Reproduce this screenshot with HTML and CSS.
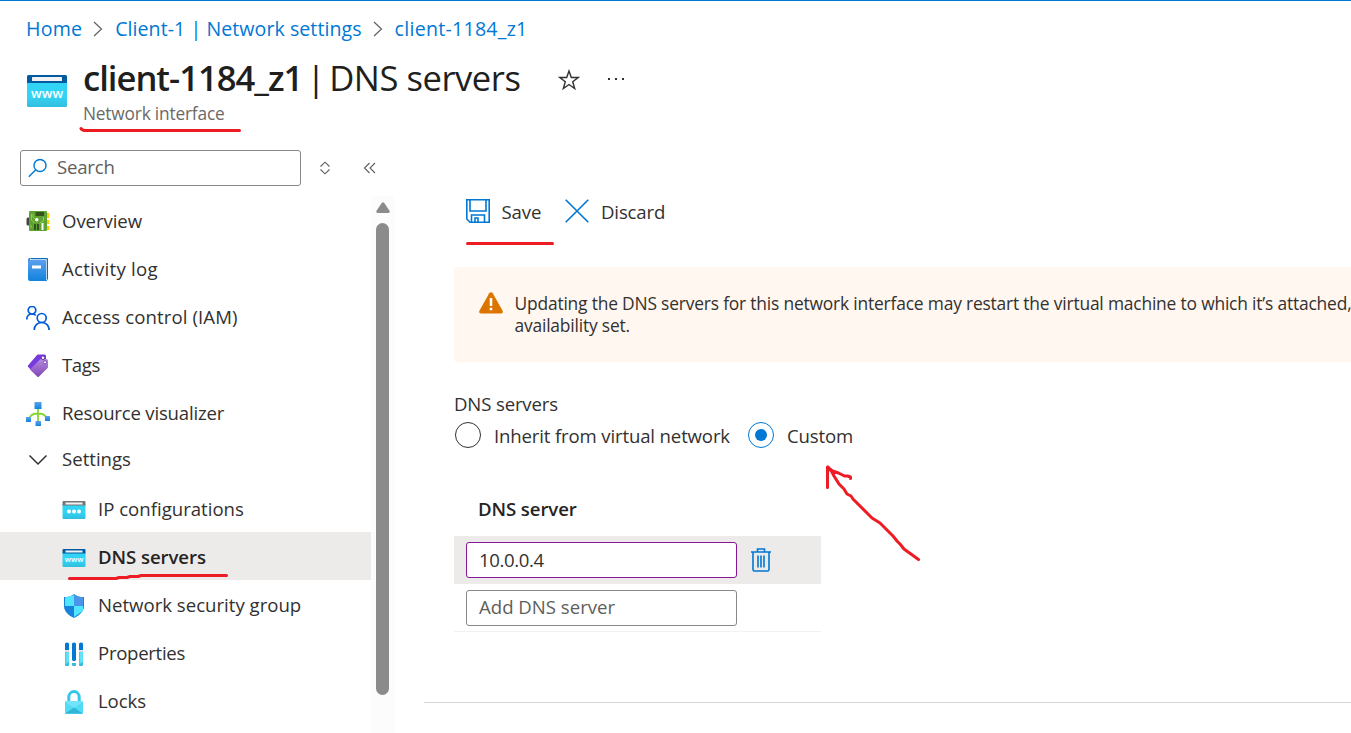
FILE: index.html
```html
<!DOCTYPE html>
<html lang="en">
<head>
<meta charset="utf-8">
<title>client-1184_z1 | DNS servers</title>
<link rel="stylesheet" href="styles.css">
</head>
<body>
<div class="page">
  <header class="header">
    <nav class="crumbs">
      <a class="crumb-home">Home</a>
      <svg width="10" height="16" viewBox="0 0 10 16"><path d="M1 1l7.500 7L1 15"/></svg>
      <a class="crumb-client">Client-1 | Network settings</a>
      <svg width="10" height="16" viewBox="0 0 10 16"><path d="M1 1l7.500 7L1 15"/></svg>
      <a class="crumb-nic">client-1184_z1</a>
    </nav>
    <div class="heading">
      <svg class="heading-icon" width="40" height="32" viewBox="0 0 40 32">
        <defs><linearGradient id="cy" x1="0" y1="0" x2="0" y2="1"><stop offset="0" stop-color="#32d4f5"/><stop offset=".55" stop-color="#32d4f5"/><stop offset="1" stop-color="#32bedd"/></linearGradient></defs>
        <path fill="url(#cy)" d="M0 8h40v22.500a1.500 1.500 0 0 1-1.500 1.500h-37A1.500 1.500 0 0 1 0 30.500z"/>
        <path fill="#005ba1" d="M1.500 0h37A1.500 1.500 0 0 1 40 1.500V8H0V1.500A1.500 1.500 0 0 1 1.500 0z"/>
        <rect x="5" y="2" width="30" height="4" rx=".5" fill="#f2f2f2"/>
        <text class="www" x="20" y="23" font-size="13" textLength="32">www</text>
      </svg>
      <div class="titles">
        <h1><b>client-1184_z1</b><i>|</i><span>DNS servers</span></h1>
        <p>Network interface</p>
      </div>
      <svg class="star" width="22" height="22" viewBox="0 0 22 22"><path d="M11 2l2.300 6.500h6.900l-5.500 4.200 2 6.800L11 15.500l-5.700 4 2-6.800L1.800 8.500h6.900z"/></svg>
      <svg class="dots" width="18" height="4" viewBox="0 0 18 4"><path d="M1 1h2v2H1zM8 1h2v2H8zM15 1h2v2h-2z"/></svg>
    </div>
  </header>
  <div class="body">
    <aside class="side">
      <div class="tools">
        <div class="search"><svg width="20" height="20" viewBox="0 0 20 20"><circle cx="12" cy="7.500" r="6"/><path d="M7.800 11.700L.8 18.700"/></svg><span>Search</span></div>
        <svg class="sort" width="12" height="14" viewBox="0 0 12 14"><path d="M1.500 5.500L6 1.200l4.500 4.300M1.500 8.500L6 12.800l4.500-4.300"/></svg>
        <svg class="collapse" width="14" height="12" viewBox="0 0 14 12"><path d="M6.500 1l-5 5 5 5M12 1L7 6l5 5"/></svg>
      </div>
      <div class="scroller">
        <ul class="menu">
          <li><svg width="24" height="24" viewBox="0 0 24 24"><path fill="#444" d="M2 7.500h1.500v8H2A1.500 1.500 0 0 1 .5 14V9A1.500 1.500 0 0 1 2 7.500z"/><path fill="#fc0" d="M20 3h3.300v5H20zM20 10h3.300v4H20zM20 16h3.300v4H20z"/><rect x="3" y="1" width="18" height="20" rx="1" fill="#5ea233"/><path fill="none" stroke="#86d633" d="M5.500 4v6l3 3M7 4v3l3 3M17.500 7v4l-4 2M5 18v-3"/><path fill="#35521a" d="M9.500 2h8.500v4H9.500zM8 14h2v6H8zM11 14h2v6h-2z"/><circle cx="10.800" cy="9.800" r="1.700" fill="#fff"/><path fill="#fff" d="M15.500 13h2v7h-2z"/></svg><span class="t-overview">Overview</span></li>
          <li><svg width="24" height="24" viewBox="0 0 24 24"><defs><linearGradient id="bk" x1="0" y1="0" x2="0" y2="1"><stop offset="0" stop-color="#5ea0ef"/><stop offset="1" stop-color="#0f83dc"/></linearGradient></defs><path fill="#0f6cbd" d="M4 0h17a1 1 0 0 1 1 1v20l-2 2.500z"/><path fill="#e5f1fb" d="M4 1.200h16.800V22H4z"/><path fill="url(#bk)" d="M3.500 2H19a1 1 0 0 1 1 1v19a1 1 0 0 1-1 1H4a2 2 0 0 1-2-2V1.500c0 .3.700.500 1.500.500z"/><path fill="#0f6cbd" d="M2 2a2 2 0 0 1 2-2v1.200q-1 .2-.500 1.300z"/><rect x="6" y="7.500" width="9" height="3" fill="#fff"/></svg><span class="t-activity">Activity log</span></li>
          <li><svg class="people" width="24" height="24" viewBox="0 0 24 24"><circle cx="6" cy="4.200" r="3.800"/><path d="M.8 13.500c0-3.600 2.200-5.500 5.200-5.500 1.700 0 2.900.500 3.800 1.500"/><circle cx="15.700" cy="12" r="4.500"/><path d="M8.200 24c0-4.500 3.200-7.500 7.500-7.500s7.500 3 7.500 7.500"/></svg><span class="t-access">Access control (IAM)</span></li>
          <li><svg width="24" height="24" viewBox="0 0 24 24"><defs><linearGradient id="tg" x1="0" y1="0" x2="0" y2="1"><stop offset="0" stop-color="#b689e0"/><stop offset="1" stop-color="#7f46b4"/></linearGradient></defs><path fill="#773adc" d="M12 .5h6.500A1.500 1.500 0 0 1 20 2v4.500L7 18l-5-5.200a1 1 0 0 1 0-1.300L11 1z"/><path fill="url(#tg)" d="M14.500 5h6A1.500 1.500 0 0 1 22 6.500v6.500a2 2 0 0 1-.6 1.200l-8.600 8.600a1 1 0 0 1-1.400 0L4 15.500z"/><circle cx="17" cy="3.700" r="1.800" fill="#fff" stroke="#552f99"/><circle cx="19" cy="8.300" r="1.600" fill="#fff" stroke="#7a48ae"/></svg><span class="t-tags">Tags</span></li>
          <li><svg width="24" height="24" viewBox="0 0 24 24"><path fill="none" stroke="#86d633" stroke-width="1.800" d="M12 6v14M3.500 16c1-3 4-4.500 8.500-4.500s7.500 1.500 8.500 4.500"/><g fill="url(#bk)"><rect x="8.500" width="7" height="7" rx=".6"/><rect y="15" width="5" height="5" rx=".5"/><rect x="9.500" y="19" width="5.500" height="5" rx=".5"/><rect x="19" y="14" width="5" height="5" rx=".5"/></g></svg><span class="t-resource">Resource visualizer</span></li>
          <li class="group"><svg class="chev" width="24" height="24" viewBox="0 0 24 24"><path d="M3.500 7.500L12 16l8.500-8.500"/></svg><span class="t-settings">Settings</span></li>
          <li class="sub"><svg width="24" height="24" viewBox="0 0 24 24"><path fill="url(#cy)" d="M.5 6.500h23V20a1 1 0 0 1-1 1h-21a1 1 0 0 1-1-1z"/><path fill="#767676" d="M1.500 3h21a1 1 0 0 1 1 1v3.500H.5V4a1 1 0 0 1 1-1z"/><path fill="#f2f2f2" d="M3.500 4.500h17v2h-17z"/><g fill="#fff"><circle cx="7" cy="13.500" r="2"/><circle cx="12" cy="13.500" r="2"/><circle cx="17" cy="13.500" r="2"/></g></svg><span class="t-ip">IP configurations</span></li>
          <li class="sub active"><svg width="24" height="24" viewBox="0 0 24 24"><path fill="url(#cy)" d="M.5 6.500h23V20a1 1 0 0 1-1 1h-21a1 1 0 0 1-1-1z"/><path fill="#005ba1" d="M1.500 3h21a1 1 0 0 1 1 1v3.500H.5V4a1 1 0 0 1 1-1z"/><path fill="#f2f2f2" d="M3.500 4.500h17v2h-17z"/><text class="www" x="12" y="15.500" font-size="7.500" textLength="18.500">www</text></svg><span class="t-dns">DNS servers</span></li>
          <li class="sub"><svg width="24" height="24" viewBox="0 0 24 24"><clipPath id="sh"><path d="M12 0c3 2.500 6 3 10 3v9c0 6-5 9.500-10 12C7 21.500 2 18 2 12V3c4 0 7-.5 10-3z"/></clipPath><g clip-path="url(#sh)"><path fill="#1783dc" d="M0 0h24v24H0z"/><path fill="#50e6ff" d="M3 3.500L12 1v11H3zM12 12h9v5l-9 6z"/><path fill="#4a94ea" d="M12 1l9 2.500V12h-9z"/></g></svg><span class="t-nsg">Network security group</span></li>
          <li class="sub"><svg width="24" height="24" viewBox="0 0 24 24"><path fill="#0078d4" d="M3 1.500Q5-.5 7 1.500V8H3zM10 1.500q2-2 4 0V18l-1 1h-2l-1-1zM17 1.500q2-2 4 0V8h-4z"/><path fill="#32bedd" d="M3 10h4v13q0 1-1 1H4q-1 0-1-1zM10 21h4v2q0 1-1 1h-2q-1 0-1-1zM17 10h4v13q0 1-1 1h-2q-1 0-1-1z"/><path fill="#5fe1f7" d="M3.500 10H7v10l-3.500 2zM17.500 10H21v10l-3.500 2z"/><path fill="#ccc" d="M3 8.500h4v1.200H3zM17 8.500h4v1.200h-4z"/></svg><span class="t-prop">Properties</span></li>
          <li class="sub"><svg width="24" height="24" viewBox="0 0 24 24"><path fill="none" stroke="#32c8ea" stroke-width="3" d="M6.800 12V7.200a5.200 5.700 0 0 1 10.400 0V12"/><rect x="3" y="11" width="18" height="13" rx="1" fill="#50dcf5"/><path fill="#9cebff" d="M3 12l9 6 9-6v-1H3z" opacity=".45"/><path fill="#32b4d4" d="M3.300 23.500L12 17.500l8.700 6z"/></svg><span class="t-locks">Locks</span></li>
        </ul>
        <div class="track">
          <svg width="14" height="11" viewBox="0 0 14 11"><path fill="#8b8b8b" d="M5.900.7q1.100-1 2.200 0l5.400 8q.8 2-1.100 2.200H1.600Q-.3 10.700.5 8.700z"/></svg>
          <div class="thumb"></div>
        </div>
      </div>
    </aside>
    <main class="main">
      <div class="commands">
        <svg class="line" width="24" height="24" viewBox="0 0 24 24"><path d="M.8.8h22.400v22.400H4L.8 20zM4 .8V12h16V.8M5.500 23V16h13v7M9 23v-4h3v4"/></svg><span class="t-save">Save</span>
        <svg class="line x" width="24" height="24" viewBox="0 0 24 24"><path d="M.7.7l22.600 22.600M23.300.7L.7 23.300"/></svg><span class="t-discard">Discard</span>
      </div>
      <div class="warning">
        <svg width="24" height="22" viewBox="0 0 24 22"><path fill="#db7500" d="M10.200 1.200q1.800-2 3.600 0l9.800 17.500q.9 2.600-1.500 2.800H1.900Q-.5 21.300.4 18.700z"/><path fill="#fff" d="M10.700 6h2.600v8h-2.600zM10.700 15.800h2.600v2.400h-2.600z"/></svg>
        <p><span class="warn-a">Updating the DNS servers for this network interface may restart the virtual machine to which it’s attached,</span><br><span class="warn-b">availability set.</span></p>
      </div>
      <div class="label"><span class="t-label">DNS servers</span></div>
      <div class="radios">
        <span class="radio"></span><span class="t-inherit">Inherit from virtual network</span>
        <span class="radio on"></span><span class="t-custom">Custom</span>
      </div>
      <div class="table">
        <div class="th"><span class="t-th">DNS server</span></div>
        <div class="row selected">
          <div class="field edited"><span class="t-val">10.0.0.4</span></div>
          <svg class="line trash" width="20" height="24" viewBox="0 0 20 24"><path d="M0 4h20M6.500 4V1h7v3M2 4v17.500q0 1.500 1.500 1.500h13q1.500 0 1.500-1.500V4M7 7.500v12M10 7.500v12M13 7.500v12"/></svg>
        </div>
        <div class="row"><div class="field"><span class="t-add">Add DNS server</span></div></div>
      </div>
      <div class="rule"></div>
    </main>
  </div>
  <svg class="ink" width="1351" height="733" viewBox="0 0 1351 733">
    <path d="M81 128.500q1 2 5 2h153.500M467.500 243.500h85M69.500 578.500H116l3-1h8l3-1h8l3-1h85.500"/>
    <path d="M918.500 559.500L904 549l-4-5-3-3-4-5-9-9-4-4-8-5-19-19-2-3-4-2-3-5-5-5-5-8-2-4-4-5M827.500 487.500v-20.500l5 4 6 2 6 3h3l3 1v1.500"/>
  </svg>
</div>
</body>
</html>
```
FILE: styles.css
```css
* { box-sizing: border-box; }
body { margin: 0; background: #fff; color: #323130; font: 18.6px/26px "Open Sans", "Noto Sans", sans-serif; }
h1, p, ul { margin: 0; padding: 0; }
svg { flex: none; display: block; }
span, a, b { white-space: nowrap; }
.page { position: relative; width: 1351px; height: 733px; overflow: hidden; border-top: 1px solid #0078d4; }
.header { height: 149px; padding: 14px 0 0 26px; }
.crumbs { display: flex; align-items: center; height: 28px; color: #0078d4; font-size: 19.6px; }
.crumbs svg { margin: 0 12px 0 11px; fill: none; stroke: #605e5c; stroke-width: 1.2; }
.crumb-home { letter-spacing: .2px; }
.crumb-client { letter-spacing: .05px; }
.crumb-nic { letter-spacing: .26px; }
.heading { display: flex; align-items: flex-start; height: 90px; padding-top: 10px; }
.heading-icon { margin: 22px 16px 0 1px; }
.www { fill: #fff; font-weight: 600; text-anchor: middle; }
.titles { width: 475px; }
h1 { display: flex; height: 52px; line-height: 50px; font-size: 34.6px; font-weight: 400; color: #201f1e; letter-spacing: -.47px; }
h1 b { font-weight: 600; letter-spacing: -1px; }
h1 i { font-style: normal; width: 27px; text-align: center; }
.titles p { height: 22px; line-height: 18px; font-size: 17.3px; color: #6b6967; letter-spacing: -.18px; }
.star { margin: 16px 0 0; fill: none; stroke: #323130; stroke-width: 1.4; }
.dots { margin: 24px 0 0 27px; fill: #323130; }
.body { display: flex; height: 583px; }
.side { width: 394px; }
.tools { display: flex; align-items: center; height: 36px; padding-left: 20px; }
.search { display: flex; align-items: center; width: 281px; height: 36px; padding-left: 7px; border: 1px solid #8a8886; border-radius: 3px; color: #605e5c; }
.search svg { margin-right: 9px; fill: none; stroke: #0078d4; stroke-width: 1.4; }
.search span { position: relative; top: -1px; letter-spacing: -.2px; }
.sort { margin-left: 18px; fill: none; stroke: #605e5c; stroke-width: 1.1; }
.collapse { margin-left: 32px; fill: none; stroke: #605e5c; stroke-width: 1.1; }
.scroller { display: flex; margin-top: 10px; }
.menu { width: 371px; padding-top: 1px; list-style: none; }
.menu li { display: flex; align-items: center; height: 48px; padding-left: 26px; }
.menu li svg { margin-right: 12px; position: relative; top: 1px; }
.menu .group { height: 47px; }
.menu .group svg { top: -1px; }
.menu .group span { position: relative; top: -2px; }
.menu .sub { padding-left: 62px; }
.menu .sub svg { top: 2px; }
.menu .sub span { position: relative; top: 1px; }
.menu .active { background: #edebe9; font-weight: 600; color: #252423; }
.t-overview, .t-dns { letter-spacing: -.08px; }
.t-activity { letter-spacing: .26px; }
.t-access { letter-spacing: .1px; }
.t-tags { letter-spacing: -.4px; }
.t-resource { letter-spacing: -.2px; }
.t-prop { letter-spacing: -.3px; }
.t-locks { letter-spacing: -.1px; }
.people { fill: none; stroke: #015cda; stroke-width: 1.7; }
.chev { fill: none; stroke: #323130; stroke-width: 1.5; }
.track { width: 23px; height: 537px; padding: 6px 5px 0; background: #fcfcfc; }
.track svg { margin: 0 0 10px -.5px; }
.thumb { width: 13px; height: 472px; border-radius: 7px; background: #8b8b8b; }
.main { width: 957px; padding-left: 60px; }
.commands { display: flex; align-items: center; height: 24px; margin: 49px 0 0 12px; }
.line { fill: none; stroke: #0078d4; stroke-width: 1.6; }
.commands span { margin: 2px 0 0 12px; }
.commands .t-save { margin-left: 11.500px; width: 63.500px; letter-spacing: -.1px; }
.commands .t-discard { letter-spacing: -.15px; }
.warning { display: flex; height: 95px; margin-top: 44px; padding: 25px 0 0 25px; background: #fff7f0; border-radius: 3px 0 0 3px; overflow: hidden; }
.warning p { margin-left: 11.5px; font-size: 17.4px; line-height: 22px; letter-spacing: -.185px; }
.label { height: 26px; margin-top: 29px; letter-spacing: -.15px; }
.radios { display: flex; align-items: center; height: 34px; margin-top: 1px; }
.radio { display: flex; width: 26px; height: 26px; margin-left: 1px; border: 1px solid #323130; border-radius: 50%; }
.radio.on { border-color: #0078d4; align-items: center; justify-content: center; }
.radio.on::after { content: ""; width: 12px; height: 12px; border-radius: 50%; background: #0078d4; }
.radios span + span { margin-top: 2px; }
.radios .radio.on { margin: 0; }
.t-inherit { margin-left: 13px; width: 254px; letter-spacing: -.15px; }
.t-custom { margin-left: 13px; letter-spacing: -.15px; }
.table { width: 367px; margin-top: 38px; }
.th { height: 46px; padding: 6px 24px; font-weight: 600; color: #252423; letter-spacing: -.1px; }
.row { display: flex; align-items: center; height: 48px; padding-left: 12px; border-bottom: 1px solid #f3f2f1; }
.selected { background: #edebe9; border: 0; }
.field { display: flex; align-items: center; width: 271px; height: 36px; padding: 0 0 2px 12px; background: #fff; border: 1px solid #8a8886; border-radius: 3px; color: #605e5c; }
.edited { border-color: #881798; color: #323130; padding-bottom: 0; }
.t-val { letter-spacing: -.4px; }
.trash { margin-left: 14px; }
.rule { height: 1px; margin: 70px 0 0 -30px; background: #d6d5d4; }
.ink { position: absolute; left: 0; top: -1px; fill: none; stroke: #ed1c24; stroke-width: 3; stroke-linecap: round; stroke-linejoin: round; }
```
